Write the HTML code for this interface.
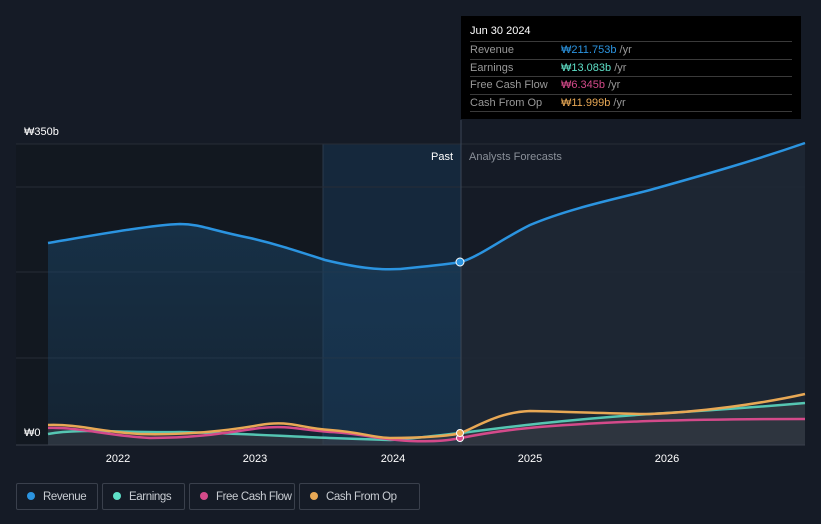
<!DOCTYPE html>
<html><head><style>
body{margin:0;background:#151b26;width:821px;height:524px;overflow:hidden;font-family:"Liberation Sans",sans-serif;position:relative}
.tt{position:absolute;left:461px;top:16px;width:340px;height:103px;background:#000;color:#fff;font-size:11px}
.tt .h{padding:9px 0 0 9px;height:16px;font-size:11px}
.row{margin:0 9px;border-top:1px solid #3a3a3a;height:16.5px;line-height:17px;color:#999;position:relative}
.row span{position:absolute;left:91px}
.row b{font-weight:normal}
.leg{position:absolute;top:483px;height:27px;border:1px solid #3a404c;border-radius:2px;color:#c8ccd2;font-size:11.5px;line-height:26px;box-sizing:border-box;white-space:nowrap;letter-spacing:-0.4px;overflow:hidden}
.leg i{display:inline-block;width:8px;height:8px;border-radius:50%;margin:0 8px 0 10px;vertical-align:0px}
</style></head><body>
<svg width="821" height="524" style="position:absolute;left:0;top:0">
<defs>
<linearGradient id="g" x1="0" y1="0" x2="0" y2="1"><stop offset="0" stop-color="#1b4466" stop-opacity=".55"/><stop offset="1" stop-color="#1b4466" stop-opacity=".25"/></linearGradient>
</defs>
<rect x="16" y="144" width="307" height="301" fill="#121820"/>
<rect x="323" y="144" width="138" height="301" fill="#15283c"/>
<line x1="323" y1="144" x2="323" y2="445" stroke="#2a3a4c"/>
<g stroke="#262c36" stroke-width="1"><line x1="16" y1="144" x2="805" y2="144"/><line x1="16" y1="187" x2="805" y2="187"/><line x1="16" y1="272" x2="805" y2="272"/><line x1="16" y1="358" x2="805" y2="358"/></g>
<path d="M48,243 C90,236 150,225 180,224 C200,224 210,230 250,238 C280,245 300,252 325,260 C350,266 380,272 410,268 C430,266 450,264 461,262 L461,445 L48,445Z" fill="url(#g)"/>
<path d="M461,262 C480,256 500,240 530,225 C570,208 620,198 650,190 C700,176 750,162 805,143 L805,445 L461,445Z" fill="#1e2835" opacity=".9"/>
<path d="M48,243 C90,236 150,225 180,224 C200,224 210,230 250,238 C280,245 300,252 325,260 C350,266 380,272 410,268 C430,266 450,264 461,262 C480,256 500,240 530,225 C570,208 620,198 650,190 C700,176 750,162 805,143" fill="none" stroke="#2b94e0" stroke-width="2.5"/>
<path d="M48,430 C80,426 120,433 180,432 C230,433 280,436 330,438 L390,440 C420,438 440,435 461,433 C500,428 560,420 650,414 C720,410 770,406 805,403 L805,445 L48,445Z" fill="#3a3f48" opacity=".6"/>
<path d="M48,434 C80,428 120,433 180,432 C230,433 280,436 330,438 L390,440 C420,438 440,435 461,433 C500,428 560,420 650,414 C720,410 770,406 805,403" fill="none" stroke="#5ee0c8" stroke-width="2.5" opacity=".85"/>
<path d="M48,428 C80,427 110,436 150,438 C200,438 230,432 260,428 C290,425 300,430 330,432 C360,433 380,440 410,441 C440,442 450,440 461,438 C500,430 540,425 650,421 C720,419 770,419 805,419" fill="none" stroke="#d44a8a" stroke-width="2.5"/>
<path d="M48,425 C80,424 100,432 140,434 C180,435 220,432 260,425 C290,420 300,428 330,430 C360,432 375,438 390,438 C420,438 450,436 461,433 C480,425 500,412 530,411 C580,412 620,414 650,414 C700,412 760,404 805,394" fill="none" stroke="#e8a855" stroke-width="2.5"/>
<line x1="16" y1="445" x2="805" y2="445" stroke="#3a404c"/>
<line x1="461" y1="120" x2="461" y2="445" stroke="#3a4656"/>
<circle cx="460" cy="262" r="4" fill="#2b94e0" stroke="#fff" stroke-width="1"/>
<circle cx="460" cy="438" r="3.5" fill="#d44a8a" stroke="#fff" stroke-width="1"/>
<circle cx="460" cy="433" r="3.5" fill="#e8a855" stroke="#fff" stroke-width="1"/>
<g font-size="11" fill="#fff"><text x="24" y="135">₩350b</text><text x="24" y="436">₩0</text></g>
<text x="453" y="160" font-size="11" fill="#fff" text-anchor="end">Past</text>
<text x="469" y="160" font-size="11" fill="#8a9099">Analysts Forecasts</text>
<g font-size="11" fill="#fff" text-anchor="middle"><text x="118" y="462">2022</text><text x="255" y="462">2023</text><text x="393" y="462">2024</text><text x="530" y="462">2025</text><text x="667" y="462">2026</text></g>
</svg>
<div class="tt"><div class="h">Jun 30 2024</div>
<div class="row">Revenue<span><b style="color:#2b94e0">₩211.753b</b> /yr</span></div>
<div class="row">Earnings<span><b style="color:#5ee0c8">₩13.083b</b> /yr</span></div>
<div class="row">Free Cash Flow<span><b style="color:#d44a8a">₩6.345b</b> /yr</span></div>
<div class="row">Cash From Op<span><b style="color:#e8a855">₩11.999b</b> /yr</span></div>
<div class="row" style="height:0"></div></div>
<div class="leg" style="left:16px;width:82px"><i style="background:#2b94e0"></i>Revenue</div>
<div class="leg" style="left:102px;width:83px"><i style="background:#5ee0c8"></i>Earnings</div>
<div class="leg" style="left:189px;width:106px"><i style="background:#d44a8a"></i>Free Cash Flow</div>
<div class="leg" style="left:299px;width:121px"><i style="background:#e8a855"></i>Cash From Op</div>
</body></html>
